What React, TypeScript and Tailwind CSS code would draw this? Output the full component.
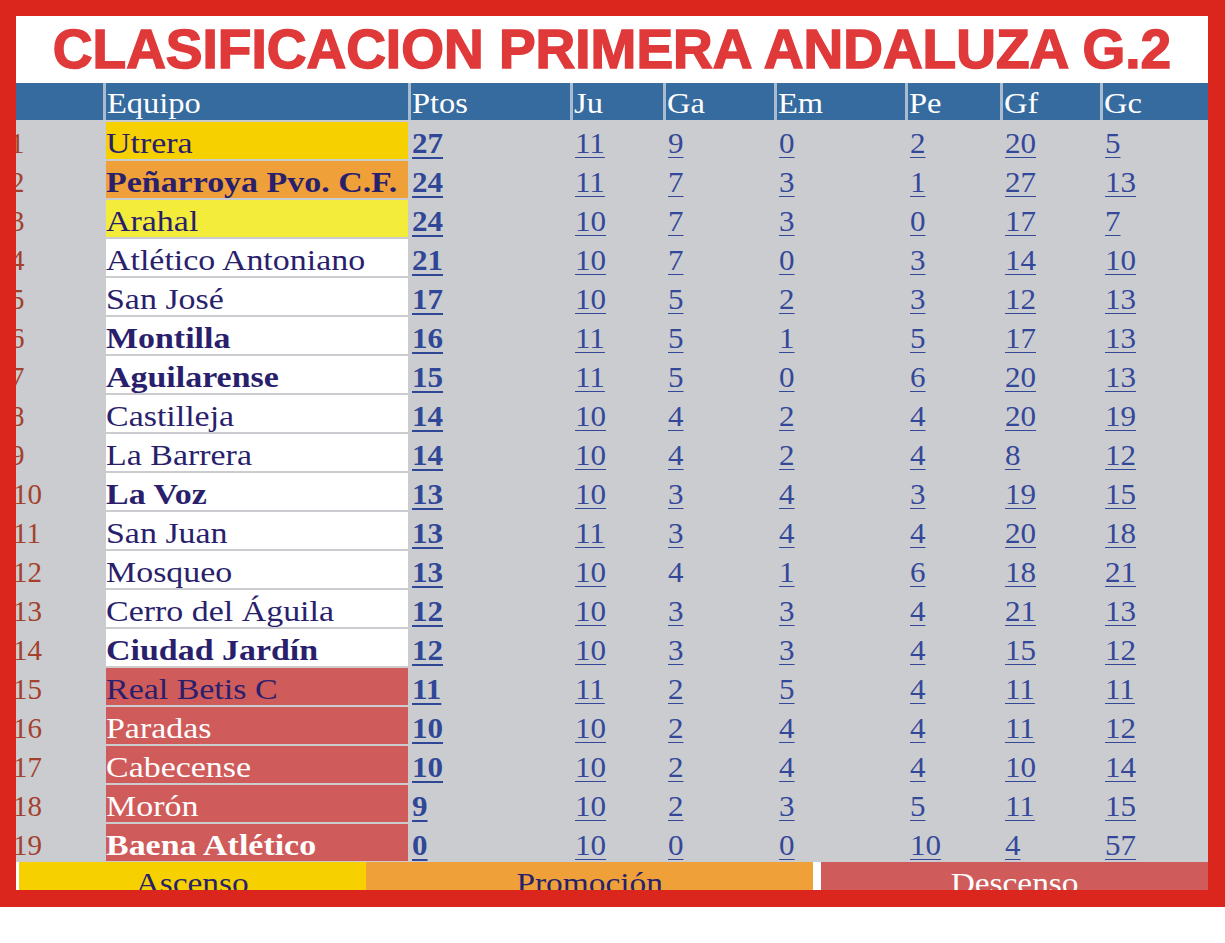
import React from "react";

type Row = {
  team: string;
  pts: number;
  stats: number[];
  bold?: boolean;
  bg: string;
  light?: boolean;
};

const rows: Row[] = [
  { team: "Utrera", pts: 27, stats: [11, 9, 0, 2, 20, 5], bg: "bg-[#f7d000]" },
  { team: "Peñarroya Pvo. C.F.", pts: 24, stats: [11, 7, 3, 1, 27, 13], bold: true, bg: "bg-[#f0a039]" },
  { team: "Arahal", pts: 24, stats: [10, 7, 3, 0, 17, 7], bg: "bg-[#f3ec3b]" },
  { team: "Atlético Antoniano", pts: 21, stats: [10, 7, 0, 3, 14, 10], bg: "bg-white" },
  { team: "San José", pts: 17, stats: [10, 5, 2, 3, 12, 13], bg: "bg-white" },
  { team: "Montilla", pts: 16, stats: [11, 5, 1, 5, 17, 13], bold: true, bg: "bg-white" },
  { team: "Aguilarense", pts: 15, stats: [11, 5, 0, 6, 20, 13], bold: true, bg: "bg-white" },
  { team: "Castilleja", pts: 14, stats: [10, 4, 2, 4, 20, 19], bg: "bg-white" },
  { team: "La Barrera", pts: 14, stats: [10, 4, 2, 4, 8, 12], bg: "bg-white" },
  { team: "La Voz", pts: 13, stats: [10, 3, 4, 3, 19, 15], bold: true, bg: "bg-white" },
  { team: "San Juan", pts: 13, stats: [11, 3, 4, 4, 20, 18], bg: "bg-white" },
  { team: "Mosqueo", pts: 13, stats: [10, 4, 1, 6, 18, 21], bg: "bg-white" },
  { team: "Cerro del Águila", pts: 12, stats: [10, 3, 3, 4, 21, 13], bg: "bg-white" },
  { team: "Ciudad Jardín", pts: 12, stats: [10, 3, 3, 4, 15, 12], bold: true, bg: "bg-white" },
  { team: "Real Betis C", pts: 11, stats: [11, 2, 5, 4, 11, 11], bg: "bg-[#d05b5b]" },
  { team: "Paradas", pts: 10, stats: [10, 2, 4, 4, 11, 12], bg: "bg-[#d05b5b]", light: true },
  { team: "Cabecense", pts: 10, stats: [10, 2, 4, 4, 10, 14], bg: "bg-[#d05b5b]", light: true },
  { team: "Morón", pts: 9, stats: [10, 2, 3, 5, 11, 15], bg: "bg-[#d05b5b]", light: true },
  { team: "Baena Atlético", pts: 0, stats: [10, 0, 0, 10, 4, 57], bold: true, bg: "bg-[#d05b5b]", light: true },
];

const headers = ["", "Equipo", "Ptos", "Ju", "Ga", "Em", "Pe", "Gf", "Gc"];

// column widths measured off the original table
const cols = "grid grid-cols-[87px_302px_159px_90px_108px_128px_92px_97px_105px] gap-x-[3px]";

export default function App() {
  return (
    <div className="bg-white min-h-[943px] font-['Liberation_Serif','Times_New_Roman',serif]">
      <div className="w-[1225px] h-[907px] border-[16px] border-r-[17px] border-b-[17px] border-[#da261d] bg-white overflow-hidden">
        {/* Title */}
        <div className="h-[67px] flex items-center justify-center">
          <h1 className="text-[55px] leading-none font-bold text-[#e0393a] font-['Liberation_Sans',Arial,sans-serif] [-webkit-text-stroke:1.5px_#e0393a]">
            CLASIFICACION PRIMERA ANDALUZA G.2
          </h1>
        </div>

        {/* Header */}
        <div className={`${cols} bg-[#aabbcf] h-[37px]`}>
          {headers.map((h, i) => (
            <div
              key={i}
              className="bg-[#366ba0] text-white text-[29px] leading-[32px] pt-[4px] pl-[1px] whitespace-nowrap"
            >
              <span className="inline-block origin-left scale-x-[1.12]">{h}</span>
            </div>
          ))}
        </div>

        {/* Body */}
        <div className="bg-[#cbccd0] pt-[2px] pb-[1px] flex flex-col gap-y-[2px] overflow-hidden">
          {rows.map((r, i) => {
            const rank = i + 1;
            return (
              <div key={r.team} className={`${cols} h-[37px] text-[29px] leading-[32px]`}>
                <div className="pt-[5px] text-[#a3412d] whitespace-nowrap">
                  <span className={rank < 10 ? "-ml-[6px]" : "-ml-[3px]"}>{rank}</span>
                </div>
                <div
                  className={`${r.bg} pt-[5px] whitespace-nowrap overflow-hidden ${
                    r.bold ? "font-bold" : ""
                  } ${r.light ? "text-white" : "text-[#2a1f6c]"}`}
                >
                  <span className="inline-block origin-left scale-x-[1.17]">{r.team}</span>
                </div>
                <div className="pt-[5px] pl-[1px] font-bold text-[#2f4796]">
                  <span className="inline-block origin-left scale-x-[1.07] underline underline-offset-[4px]">
                    {r.pts}
                  </span>
                </div>
                {r.stats.map((n, j) => (
                  <div key={j} className="pt-[5px] pl-[2px] text-[#34489a]">
                    <span
                      className={`inline-block origin-left scale-x-[1.07] ${
                        rank === 12 && j === 1 ? "" : "underline underline-offset-[4px] decoration-1"
                      }`}
                    >
                      {n}
                    </span>
                  </div>
                ))}
              </div>
            );
          })}
        </div>

        {/* Legend */}
        <div className="h-[28px] flex overflow-hidden text-[29px] leading-[32px]">
          <div className="w-[3px] bg-white" />
          <div className="w-[347px] bg-[#f7d000] text-[#2a1f6c] text-center pt-[5px]">
            <span className="inline-block scale-x-[1.15]">Ascenso</span>
          </div>
          <div className="w-[447px] bg-[#f0a039] text-[#2a1f6c] text-center pt-[5px]">
            <span className="inline-block scale-x-[1.15]">Promoción</span>
          </div>
          <div className="w-[8px] bg-white" />
          <div className="flex-1 bg-[#d05b5b] text-white text-center pt-[5px]">
            <span className="inline-block scale-x-[1.15]">Descenso</span>
          </div>
        </div>
      </div>
    </div>
  );
}
